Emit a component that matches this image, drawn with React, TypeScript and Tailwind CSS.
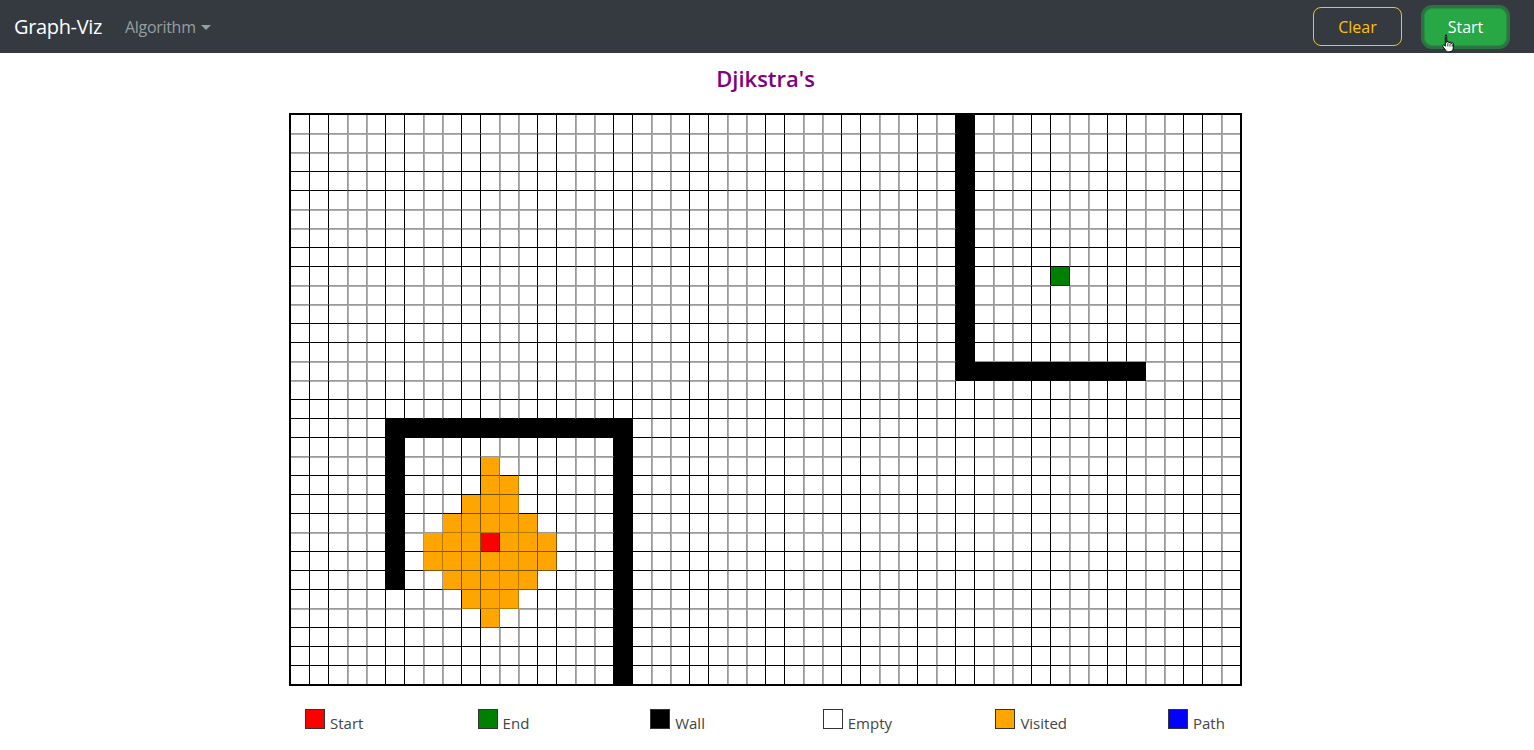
import React from "react";

const ROWS = 30;
const COLS = 50;

type Cell = "empty" | "wall" | "start" | "end" | "visited";

function buildGrid(): Cell[][] {
  const g: Cell[][] = [];
  for (let r = 0; r < ROWS; r++) {
    const row: Cell[] = [];
    for (let c = 0; c < COLS; c++) row.push("empty");
    g.push(row);
  }
  // top-right L wall
  for (let r = 0; r <= 13; r++) g[r][35] = "wall";
  for (let c = 35; c <= 44; c++) g[13][c] = "wall";
  // bottom-left box wall
  for (let c = 5; c <= 17; c++) g[16][c] = "wall";
  for (let r = 16; r <= 24; r++) g[r][5] = "wall";
  for (let r = 16; r < ROWS; r++) g[r][17] = "wall";
  // visited diamond
  const visited: [number, number, number][] = [
    [18, 10, 10],
    [19, 10, 11],
    [20, 9, 11],
    [21, 8, 12],
    [22, 7, 13],
    [23, 7, 13],
    [24, 8, 12],
    [25, 9, 11],
    [26, 10, 10],
  ];
  for (const [r, a, b] of visited) for (let c = a; c <= b; c++) g[r][c] = "visited";
  g[22][10] = "start";
  g[8][40] = "end";
  return g;
}

const GRID = buildGrid();

function colDark(c: number) {
  return c <= 32 ? c % 4 < 2 : c % 4 >= 2;
}
function rowDark(r: number) {
  if (r <= 13) return r % 4 >= 2;
  if (r <= 15) return true;
  return r % 4 !== 1;
}

function cellClass(type: Cell, r: number, c: number) {
  const parts: string[] = ["shrink-0"];
  const lastCol = c === COLS - 1;
  const lastRow = r === ROWS - 1;
  parts.push(lastCol ? "w-[18px]" : "w-[19px] border-r");
  parts.push(lastRow ? "h-[18px]" : "h-[19px] border-b");
  if (type === "wall") {
    parts.push("bg-black border-black");
  } else if (type === "visited") {
    parts.push("bg-[#ffa500]");
    parts.push(colDark(c) ? "border-r-[#7a5300]" : "border-r-[#b87a00]");
    parts.push(rowDark(r) ? "border-b-[#7a5300]" : "border-b-[#b87a00]");
  } else if (type === "start") {
    parts.push("bg-[#ff0000] border-[#800000]");
  } else if (type === "end") {
    parts.push("bg-[#008000] border-[#004000]");
  } else {
    parts.push("bg-white");
    parts.push(colDark(c) ? "border-r-black" : "border-r-[#9a9a9a]");
    parts.push(rowDark(r) ? "border-b-black" : "border-b-[#9a9a9a]");
    const leftGray = c > 0 && !colDark(c - 1) && GRID[r][c - 1] === "empty";
    const topGray = r > 0 && !rowDark(r - 1) && GRID[r - 1][c] === "empty";
    if (leftGray && topGray) parts.push("shadow-[inset_1px_0_0_#b0b0b0,inset_0_1px_0_#b0b0b0]");
    else if (leftGray) parts.push("shadow-[inset_1px_0_0_#b0b0b0]");
    else if (topGray) parts.push("shadow-[inset_0_1px_0_#b0b0b0]");
  }
  return parts.join(" ");
}

function HandCursor() {
  return (
    <svg width="14" height="19" viewBox="0 0 14 19" className="absolute left-[18px] top-[26px] pointer-events-none">
      <path
        d="M3.5 1.2c.7 0 1.2.5 1.2 1.2v6.1c0-.7.5-1.1 1.1-1.1s1.1.5 1.1 1.1v.6c0-.6.5-1.1 1.1-1.1s1.1.5 1.1 1.1v.6c0-.6.5-1 1.1-1s1.1.5 1.1 1.1v3.9c0 2.3-1.4 4.1-3.6 4.1H6.3c-1.2 0-2-.5-2.7-1.5L.9 12.6c-.4-.6-.3-1.3.3-1.6.5-.3 1.1-.1 1.5.4l.6.9V2.4c0-.7.5-1.2 1.2-1.2z"
        fill="#fff"
        stroke="#000"
        strokeWidth="1"
        strokeLinejoin="round"
      />
      <path d="M5.8 9.2v3.2M8 9.7v2.8M10.2 10.3v2.3" stroke="#000" strokeWidth="0.8" />
    </svg>
  );
}

const legend: { label: string; cls: string }[] = [
  { label: "Start", cls: "bg-[#ff0000]" },
  { label: "End", cls: "bg-[#008000]" },
  { label: "Wall", cls: "bg-black" },
  { label: "Empty", cls: "bg-white" },
  { label: "Visited", cls: "bg-[#ffa500]" },
  { label: "Path", cls: "bg-[#0000ff]" },
];

export default function App() {
  return (
    <div className="min-h-[750px] bg-white font-['Open_Sans','Noto_Sans',sans-serif]">
      <nav className="h-[53px] bg-[#343a40] flex items-center pl-[14px] pr-[27px]">
        <span className="text-[20px] leading-[30px] tracking-[-0.35px] text-white">Graph-Viz</span>
        <span className="ml-[23px] flex items-center text-[16px] tracking-[-0.3px] text-[#9a9da0]">
          Algorithm
          <span className="ml-[5px] mt-[1px] w-0 h-0 border-l-[5px] border-r-[5px] border-t-[5px] border-l-transparent border-r-transparent border-t-[#9a9da0]" />
        </span>
        <div className="ml-auto flex items-center">
          <button className="w-[89px] h-[39px] rounded-[8px] border border-[#ffc107] text-[#ffc107] text-[16px] bg-transparent">
            Clear
          </button>
          <div className="relative ml-[22px]">
            <button className="w-[83px] h-[38px] rounded-[8px] border border-[#24913c] bg-[#28a745] text-white text-[16px] shadow-[0_0_0_3px_rgba(40,167,69,0.5)]">
              Start
            </button>
            <HandCursor />
          </div>
        </div>
      </nav>
      <main className="pr-[3px] flex flex-col items-center">
        <h4 className="mt-[11px] text-[22px] leading-[29px] font-semibold text-[#800080]">Djikstra's</h4>
        <div className="mt-[20px] w-[953px]">
          <div className="border-2 border-black flex flex-col w-[953px]">
            {GRID.map((row, r) => (
              <div key={r} className="flex">
                {row.map((cell, c) => (
                  <div key={c} className={cellClass(cell, r, c)} />
                ))}
              </div>
            ))}
          </div>
          <div className="mt-[23px] pl-[16px] flex">
            {legend.map((l) => (
              <div key={l.label} className="w-[172.6px] shrink-0 flex items-baseline">
                <div className={`w-[20px] h-[20px] border border-[#333] ${l.cls}`} />
                <span className="ml-[5px] text-[15px] leading-[22px] text-[#444]">{l.label}</span>
              </div>
            ))}
          </div>
        </div>
      </main>
    </div>
  );
}
